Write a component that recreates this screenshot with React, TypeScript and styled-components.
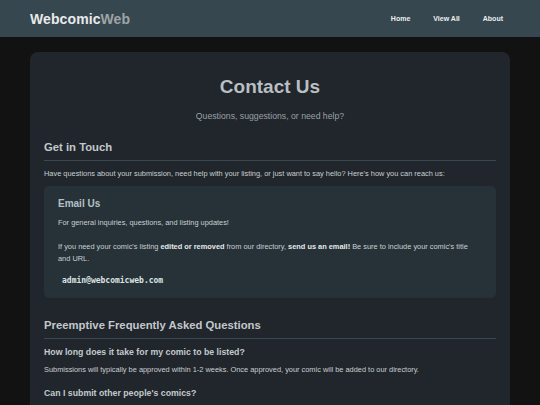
import React from 'react';
import styled, { createGlobalStyle } from 'styled-components';

const GlobalStyle = createGlobalStyle`
  html, body {
    margin: 0;
    padding: 0;
    background-color: #121212;
    font-family: 'Liberation Sans', Arial, sans-serif;
    color: #cfd8dc;
  }
  * {
    box-sizing: border-box;
  }
`;

const Header = styled.header`
  height: 37px;
  background-color: #37474f;
  display: flex;
  align-items: center;
  justify-content: space-between;
  padding: 0 37px 0 30px;
`;

const Logo = styled.div`
  font-size: 14px;
  font-weight: 700;
  color: #e8eaeb;
  letter-spacing: 0.1px;
`;

const LogoAccent = styled.span`
  color: #9ea4a7;
`;

const Nav = styled.nav`
  display: flex;
  gap: 23px;
`;

const NavLink = styled.a`
  font-size: 7px;
  font-weight: 700;
  color: #eceff1;
  text-decoration: none;
`;

const Main = styled.main`
  padding: 15px 30px 0;
`;

const Card = styled.section`
  background-color: #20262b;
  border-radius: 8px 8px 0 0;
  padding: 23px 14px 20px;
  min-height: 360px;
`;

const Title = styled.h1`
  margin: 0;
  font-size: 19px;
  line-height: 24px;
  font-weight: 700;
  text-align: center;
  color: #b9bfc2;
`;

const Subtitle = styled.p`
  margin: 11px 0 0;
  font-size: 8.7px;
  line-height: 12px;
  text-align: center;
  color: #9aa1a5;
`;

const SectionTitle = styled.h2<{ $gap: number }>`
  margin: ${({ $gap }) => $gap}px 0 0;
  padding-bottom: 6px;
  border-bottom: 1px solid #3a4850;
  font-size: 11.3px;
  line-height: 14px;
  font-weight: 700;
  color: #c3c8cb;
`;

const Text = styled.p<{ $gap: number }>`
  margin: ${({ $gap }) => $gap}px 0 0;
  font-size: 7.4px;
  line-height: 12px;
  color: #cad0d3;

  strong {
    font-weight: 700;
    color: #e6e9ea;
  }
`;

const EmailBox = styled.div`
  margin-top: 6px;
  background-color: #263238;
  border-radius: 5px;
  padding: 11px 14px 11px;
`;

const BoxTitle = styled.h3`
  margin: 0;
  font-size: 10px;
  line-height: 13px;
  font-weight: 700;
  color: #b6c0c6;
`;

const EmailCode = styled.code`
  display: block;
  margin-top: 10px;
  padding-left: 4px;
  font-family: 'DejaVu Sans Mono', 'Liberation Mono', monospace;
  font-size: 8px;
  line-height: 12px;
  font-weight: 700;
  color: #dde2e4;
`;

const Question = styled.h3<{ $gap: number }>`
  margin: ${({ $gap }) => $gap}px 0 0;
  font-size: 8.75px;
  line-height: 11px;
  font-weight: 700;
  color: #c3cacd;
`;

const faqs = [
  {
    q: 'How long does it take for my comic to be listed?',
    a: 'Submissions will typically be approved within 1-2 weeks. Once approved, your comic will be added to our directory.',
  },
  {
    q: "Can I submit other people's comics?",
    a: '',
  },
];

const App: React.FC = () => {
  return (
    <>
      <GlobalStyle />
      <Header>
        <Logo>
          Webcomic<LogoAccent>Web</LogoAccent>
        </Logo>
        <Nav>
          <NavLink href="#">Home</NavLink>
          <NavLink href="#">View All</NavLink>
          <NavLink href="#">About</NavLink>
        </Nav>
      </Header>
      <Main>
        <Card>
          <Title>Contact Us</Title>
          <Subtitle>Questions, suggestions, or need help?</Subtitle>

          <SectionTitle $gap={18}>Get in Touch</SectionTitle>
          <Text $gap={7}>
            Have questions about your submission, need help with your listing, or just want to say hello? Here's how you
            can reach us:
          </Text>

          <EmailBox>
            <BoxTitle>Email Us</BoxTitle>
            <Text $gap={7}>For general inquiries, questions, and listing updates!</Text>
            <Text $gap={12}>
              If you need your comic's listing <strong>edited or removed</strong> from our directory,{' '}
              <strong>send us an email!</strong> Be sure to include your comic's title and URL.
            </Text>
            <EmailCode>admin@webcomicweb.com</EmailCode>
          </EmailBox>

          <SectionTitle $gap={20}>Preemptive Frequently Asked Questions</SectionTitle>
          {faqs.map((item, i) => (
            <React.Fragment key={item.q}>
              <Question $gap={i === 0 ? 8 : 12}>{item.q}</Question>
              {item.a && <Text $gap={6}>{item.a}</Text>}
            </React.Fragment>
          ))}
        </Card>
      </Main>
    </>
  );
};

export default App;
